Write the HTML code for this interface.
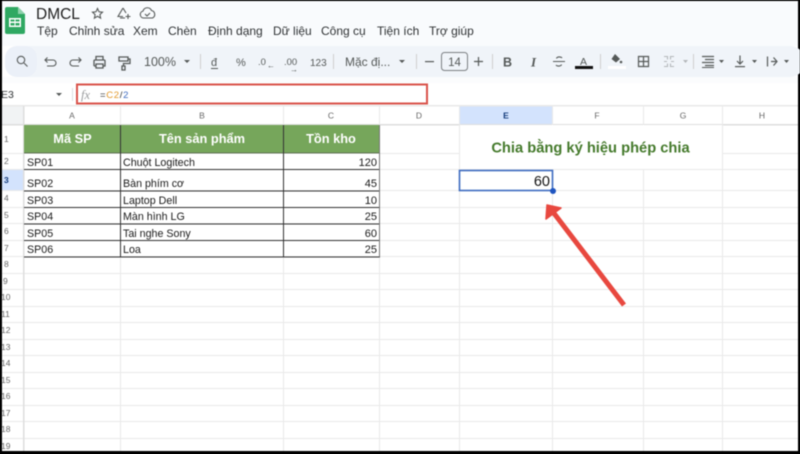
<!DOCTYPE html>
<html><head><meta charset="utf-8"><style>
html,body{margin:0;padding:0;width:800px;height:454px;overflow:hidden;background:#000}
svg{display:block;filter:blur(0.4px)}
text{font-family:"Liberation Sans",sans-serif}
</style></head><body>
<svg width="800" height="454" viewBox="0 0 800 454" xmlns="http://www.w3.org/2000/svg">
<rect width="800" height="454" fill="#000"/>
<rect x="2" y="1" width="796" height="450" fill="#fff"/>
<rect x="2" y="1" width="796" height="45" fill="#f9fbfd"/>
<rect x="2" y="77" width="796" height="6" fill="#fbfcfd"/>
<rect x="5" y="46" width="800" height="31" rx="15" fill="#f0f4f9"/>
<!-- logo -->
<path d="M5 9a2 2 0 0 1 2-2h11l7 7v18a2 2 0 0 1-2 2H7a2 2 0 0 1-2-2z" fill="#2fa862"/>
<path d="M18 7l7 7h-7z" fill="#8ed1ab"/>
<path d="M9 18h12v9H9z M10.500 19.500v2h4v-2z M15.500 19.500v2h4v-2z M10.500 23v2.500h4V23z M15.500 23v2.500h4V23z" fill="#fff" fill-rule="evenodd"/>
<text x="36" y="19" font-size="15.500" fill="#1f1f1f">DMCL</text>
<g fill="none" stroke="#555958" stroke-width="1.100">
<path d="M97.500 8.500l1.500 3.300 3.500.4-2.600 2.400.7 3.500-3.100-1.800-3.100 1.800.7-3.500-2.600-2.400 3.500-.4z"/>
<path d="M123 8l-5 8.500h5M123 8l3 5M120 18h5M128 14v5M125.500 16.500h5"/>
<path d="M146 18h-2.500a3.500 3.500 0 0 1-.5-6.900 4.500 4.500 0 0 1 8.500-.6 4 4 0 0 1 1 7.500zM145 14l2 2 3-3"/>
</g>
<g font-size="12" fill="#303335">
<text x="37" y="35">Tệp</text><text x="69" y="35">Chỉnh sửa</text><text x="133" y="35">Xem</text><text x="168" y="35">Chèn</text><text x="208" y="35">Định dạng</text><text x="273" y="35">Dữ liệu</text><text x="321" y="35">Công cụ</text><text x="377" y="35">Tiện ích</text><text x="429" y="35">Trợ giúp</text>
</g>
<!-- toolbar -->
<rect x="5" y="46" width="32" height="31" rx="12" fill="#ebf0f8"/>
<g fill="none" stroke="#555958" stroke-width="1.100">
<circle cx="21" cy="60" r="3.700"/><path d="M24 63l3.500 3.500"/>
<path d="M45 60h8a3 3 0 0 1 0 6h-6M47.500 57.500l-2.500 2.500 2.500 2.500"/>
<path d="M81 60h-8a3 3 0 0 0 0 6h6M78.500 57.500l2.500 2.500-2.500 2.500"/>
<path d="M96 60v-3.500h7V60M94 66v-5a1 1 0 0 1 1-1h9a1 1 0 0 1 1 1v5h-2.500M96.500 66h-2.500M96 64h7v4h-7z" stroke-width="1.300"/>
<path d="M119 57h9v4h-9zM128 59h2v4.500h-6.500V66M122 66h3v4h-3z" stroke-width="1.300"/>
</g>
<text x="144" y="66" font-size="12.500" fill="#555958">100%</text>
<path d="M184 60h6l-3 3z" fill="#555958"/>
<rect x="200" y="54" width="1" height="15" fill="#cfcfcf"/>
<text x="211" y="66" font-size="11" fill="#555958">đ</text><rect x="211" y="68" width="7" height="1" fill="#555958"/>
<text x="236" y="66" font-size="11" fill="#555958">%</text>
<text x="258" y="65" font-size="9.500" fill="#555958">.0</text><text x="267" y="68" font-size="8" fill="#555958">←</text>
<text x="284" y="65" font-size="9.500" fill="#555958">.00</text><text x="290" y="72" font-size="8" fill="#555958">→</text>
<text x="310" y="66" font-size="10" fill="#555958">123</text>
<rect x="333" y="54" width="1" height="15" fill="#cfcfcf"/>
<text x="345" y="66" font-size="12" fill="#555958">Mặc đị...</text>
<path d="M399 60h6l-3 3z" fill="#555958"/>
<rect x="416" y="54" width="1" height="15" fill="#cfcfcf"/>
<rect x="425" y="61" width="9" height="1.200" fill="#555958"/>
<rect x="441.500" y="52.500" width="26" height="18" rx="3" fill="none" stroke="#7b7f82"/>
<text x="454.500" y="66" font-size="11.500" text-anchor="middle" fill="#555958">14</text>
<path d="M474 61.500h9M478.500 57v9" stroke="#555958" stroke-width="1.200"/>
<rect x="492" y="54" width="1" height="15" fill="#cfcfcf"/>
<text x="503" y="66.500" font-size="12.500" font-weight="bold" fill="#555958">B</text>
<text x="531" y="66.500" font-size="13" font-weight="bold" font-style="italic" style="font-family:'Liberation Serif'" fill="#555958">I</text>
<path d="M553 61.500h12M562 58c-1-1.500-5-1.500-5.500.5M556 65c1 1.500 5 1.500 5.500-.5" stroke="#555958" stroke-width="1.100" fill="none"/>
<text x="580" y="65" font-size="10.500" fill="#555958">A</text>
<rect x="575" y="66" width="18" height="3" fill="#111"/>
<rect x="600" y="54" width="1" height="15" fill="#cfcfcf"/>
<path d="M615 54l5 5-4 3.500-4.500-3.500z" fill="#555958"/><circle cx="621" cy="62" r="1.300" fill="#555958"/>
<rect x="608" y="66" width="18" height="3" fill="#fff"/>
<path d="M638.500 56.500h10v10h-10zM643.500 56.500v10M638.500 61.500h10" fill="none" stroke="#555958" stroke-width="1.200"/>
<path d="M664 56.500h3.500v3M664 66.500h3.500v-3M674 56.500h-3.500v3M674 66.500h-3.500v-3M664 61.500h3M671 61.500h3" fill="none" stroke="#b4b7ba" stroke-width="1.100"/>
<path d="M683 60h5l-2.500 3z" fill="#b4b7ba"/>
<rect x="693" y="54" width="1" height="15" fill="#cfcfcf"/>
<path d="M702 56.500h12M705 59.500h9M702 62.500h12M705 65.500h9" stroke="#555958" stroke-width="1.200"/><path d="M702 67.500h12" stroke="#555958"/>
<path d="M719 60h5l-2.500 3z" fill="#555958"/>
<path d="M740 55.500v8M737 61l3 3 3-3" fill="none" stroke="#555958" stroke-width="1.200"/><rect x="735" y="66" width="10" height="1.200" fill="#555958"/>
<path d="M752 60h5l-2.500 3z" fill="#555958"/>
<path d="M767.500 56.500v10M771 61.500h5M773.500 57.500l3.500 4-3.500 4" fill="none" stroke="#555958" stroke-width="1.200"/>
<path d="M784 60h5l-2.500 3z" fill="#555958"/>
<!-- formula row -->
<text x="1" y="98" font-size="10.500" fill="#303335">E3</text>
<path d="M56 93h6l-3 3z" fill="#555958"/>
<rect x="72" y="88" width="1" height="13" fill="#dcdfe2"/>
<rect x="77" y="84.500" width="350" height="19" fill="#fff" stroke="#d9534a" stroke-width="2"/>
<text x="81" y="99" font-size="12.500" font-style="italic" fill="#9a9c9e" style="font-family:'Liberation Serif'">fx</text>
<text x="100" y="98" font-size="9.500" letter-spacing="0.700"><tspan fill="#303335">=</tspan><tspan fill="#e39a2c">C2</tspan><tspan fill="#303335">/</tspan><tspan fill="#3d6bc0">2</tspan></text>
<!-- header bg -->
<rect x="2" y="106" width="796" height="19" fill="#fff"/>
<rect x="459" y="106" width="94" height="19" fill="#d3e3fd"/>
<rect x="2" y="125" width="22" height="326" fill="#fff"/>
<rect x="2" y="170" width="22" height="21" fill="#d3e3fd"/>
<rect x="2" y="106" width="22" height="19" fill="#f1f3f4"/>
<!-- row lines -->
<g fill="#e9e9e9">
<rect x="2" y="105" width="796" height="1.500"/>
<rect x="2" y="124" width="796" height="1.500" fill="#dedede"/>
<rect x="2" y="153" width="22" height="1"/><rect x="2" y="169" width="796" height="1"/><rect x="2" y="190" width="796" height="1"/><rect x="2" y="207" width="796" height="1"/><rect x="2" y="223" width="796" height="1"/><rect x="2" y="240" width="796" height="1"/><rect x="2" y="256" width="796" height="1"/><rect x="2" y="273" width="796" height="1"/><rect x="2" y="289" width="796" height="1"/><rect x="2" y="306" width="796" height="1"/><rect x="2" y="322" width="796" height="1"/><rect x="2" y="339" width="796" height="1"/><rect x="2" y="355" width="796" height="1"/><rect x="2" y="372" width="796" height="1"/><rect x="2" y="388" width="796" height="1"/><rect x="2" y="405" width="796" height="1"/><rect x="2" y="421" width="796" height="1"/><rect x="2" y="438" width="796" height="1"/>
<rect x="380" y="153" width="79" height="1"/><rect x="723" y="153" width="75" height="1"/>
<!-- col lines -->
<rect x="23" y="106" width="1.500" height="345" fill="#dedede"/>
<rect x="120" y="106" width="1" height="345"/><rect x="283" y="106" width="1" height="345"/><rect x="379" y="106" width="1" height="345"/><rect x="459" y="106" width="1" height="345"/><rect x="552" y="106" width="1" height="345"/>
<rect x="643" y="106" width="1" height="19"/><rect x="643" y="169" width="1" height="282"/>
<rect x="722" y="106" width="1" height="345"/>
</g>
<rect x="460" y="125" width="262" height="44" fill="#fff"/>
<!-- col headers -->
<g font-size="8.500" fill="#666" text-anchor="middle">
<text x="72" y="118.500">A</text><text x="202" y="118.500">B</text><text x="331" y="118.500">C</text><text x="419" y="118.500">D</text><text x="506" y="118.500" font-weight="bold" fill="#123a7a">E</text><text x="597" y="118.500">F</text><text x="683" y="118.500">G</text><text x="762" y="118.500">H</text>
</g>
<!-- row headers -->
<g font-size="8.500" fill="#666">
<text x="4" y="142">1</text><text x="4" y="164">2</text><text x="4" y="183" font-weight="bold" fill="#123a7a">3</text><text x="4" y="201">4</text><text x="4" y="218">5</text><text x="4" y="234">6</text><text x="4" y="251">7</text><text x="4" y="267">8</text><text x="3" y="284">9</text><text x="1" y="300">10</text><text x="1" y="317">11</text><text x="1" y="333">12</text><text x="1" y="350">13</text><text x="1" y="366">14</text><text x="1" y="383">15</text><text x="1" y="399">16</text><text x="1" y="416">17</text><text x="1" y="432">18</text><text x="1" y="449">19</text>
</g>
<!-- table -->
<rect x="24" y="125" width="356" height="28" fill="#76a65b"/>
<rect x="24" y="152.500" width="356" height="1" fill="#5f6f55"/>
<g fill="#333">
<rect x="24" y="169" width="356" height="1"/><rect x="24" y="190.500" width="356" height="1"/><rect x="24" y="207" width="356" height="1"/><rect x="24" y="223.500" width="356" height="1"/><rect x="24" y="240" width="356" height="1"/><rect x="24" y="256.500" width="356" height="1"/>
<rect x="120" y="125" width="1" height="132"/><rect x="283" y="153" width="1" height="104"/><rect x="379" y="125" width="1" height="132" fill="#777"/>
<rect x="283" y="125" width="1" height="28"/>
</g>
<g font-size="12.800" font-weight="bold" fill="#fff" text-anchor="middle">
<text x="72.500" y="143">Mã SP</text><text x="202" y="143">Tên sản phẩm</text><text x="331" y="143">Tồn kho</text>
</g>
<g font-size="10.700" fill="#1a1a1a">
<text x="27" y="166">SP01</text><text x="27" y="187">SP02</text><text x="27" y="204">SP03</text><text x="27" y="220">SP04</text><text x="27" y="237">SP05</text><text x="27" y="253">SP06</text>
<text x="123" y="166">Chuột Logitech</text><text x="123" y="187">Bàn phím cơ</text><text x="123" y="204">Laptop Dell</text><text x="123" y="220">Màn hình LG</text><text x="123" y="237">Tai nghe Sony</text><text x="123" y="253">Loa</text>
</g>
<g font-size="11" fill="#1a1a1a" text-anchor="end">
<text x="377" y="166">120</text><text x="377" y="187">45</text><text x="377" y="204">10</text><text x="377" y="220">25</text><text x="377" y="237">60</text><text x="377" y="253">25</text>
</g>
<!-- E title -->
<text x="590.500" y="152.500" font-size="14.700" font-weight="bold" fill="#457a2c" text-anchor="middle">Chia bằng ký hiệu phép chia</text>
<!-- selected -->
<rect x="459.500" y="170.500" width="93" height="20" fill="#fff" stroke="#3d6bc0" stroke-width="1.600"/>
<text x="550" y="186" font-size="14.500" fill="#111" text-anchor="end">60</text>
<circle cx="553" cy="191" r="3" fill="#1f55c0"/>
<!-- arrow -->
<path d="M624 305L553 212" stroke="#e8483f" stroke-width="5" fill="none"/>
<path d="M547 205L561 208L546 219Z" fill="#e8483f" stroke="#e8483f" stroke-width="1.500" stroke-linejoin="round"/>
</svg>
</body></html>
